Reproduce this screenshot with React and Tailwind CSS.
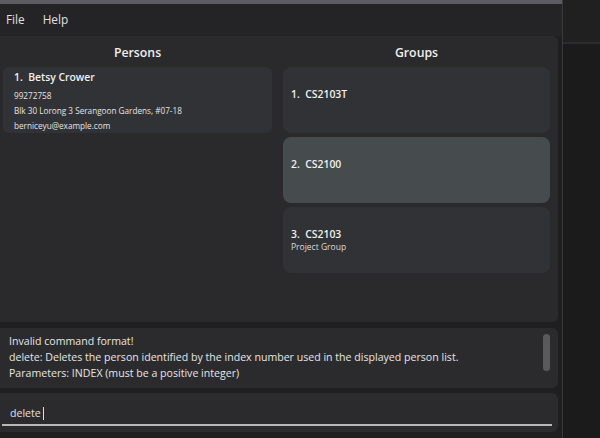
import React from 'react';

const font = { fontFamily: '"Open Sans", "Noto Sans", sans-serif' };

function GroupCard({ index, name, desc, selected }) {
    return (
        <div className={`h-[66px] rounded-lg flex flex-col justify-center pl-[8px] ${selected ? 'bg-[#464b4e]' : 'bg-[#313235]'}`}>
            <div className="text-[10.4px] font-semibold text-[#f0f0f0] leading-[14px]">
                {index}.&nbsp; {name}
            </div>
            <div className="h-[12px] text-[8.5px] text-[#dcdcdc] leading-[12px]">{desc}</div>
        </div>
    );
}

export default function App() {
    return (
        <div className="w-[600px] h-[438px] bg-[#1f1f21] flex overflow-hidden text-[#eaeaea]" style={font}>
            {/* main window */}
            <div className="w-[562px] flex flex-col">
                <div className="h-[4px] bg-[#5c5c60]" />
                <div className="h-[32px] bg-[#242426] flex items-center gap-[18px] px-[6px] text-[11.8px] text-[#e0e0e0]">
                    <span>File</span>
                    <span>Help</span>
                </div>

                {/* lists */}
                <div className="w-[558px] h-[286px] bg-[#2a2a2c] rounded-r-md flex gap-[11px] pl-[3px] pr-[8px]">
                    <div className="w-[269px] flex flex-col">
                        <div className="h-[31px] pt-[3px] flex items-center justify-center text-[12.3px] font-semibold text-[#f0f0f0]">Persons</div>
                        <div className="h-[66px] bg-[#313235] rounded-md pl-[11px] pt-[3px]">
                            <div className="text-[10.4px] font-semibold text-[#f0f0f0] leading-[14px] mb-[4px]">1.&nbsp; Betsy Crower</div>
                            <div className="text-[8.2px] leading-[15px] text-[#e4e4e4]">99272758</div>
                            <div className="text-[8.2px] leading-[15px] text-[#e4e4e4]">Blk 30 Lorong 3 Serangoon Gardens, #07-18</div>
                            <div className="text-[8.2px] leading-[15px] text-[#e4e4e4]">berniceyu@example.com</div>
                        </div>
                    </div>
                    <div className="flex-1 flex flex-col">
                        <div className="h-[31px] pt-[3px] flex items-center justify-center text-[12.3px] font-semibold text-[#f0f0f0]">Groups</div>
                        <div className="flex flex-col gap-[4px]">
                            <GroupCard index={1} name="CS2103T" />
                            <GroupCard index={2} name="CS2100" selected />
                            <GroupCard index={3} name="CS2103" desc="Project Group" />
                        </div>
                    </div>
                </div>

                {/* result box */}
                <div className="mt-[6px] w-[558px] h-[60px] bg-[#2b2b2d] rounded-r-md flex pl-[9px] pr-[8px] pt-[5px] overflow-hidden">
                    <div className="flex-1 text-[10.6px] leading-[16px] text-[#e6e6e6]">
                        <div>Invalid command format!</div>
                        <div>delete: Deletes the person identified by the index number used in the displayed person list.</div>
                        <div>Parameters: INDEX (must be a positive integer)</div>
                    </div>
                    <div className="w-[7px] h-[37px] mt-[1px] rounded-sm bg-[#5a5a5d]" />
                </div>

                {/* command box */}
                <div className="mt-[5px] w-[558px] h-[39px] bg-[#2b2b2d] rounded-r-md flex flex-col justify-end pb-[6px] pl-[2px] pr-[6px]">
                    <div className="flex items-center pl-[8px] text-[10.6px] text-[#e0e0e0] leading-[16px]">
                        delete<span className="ml-[2px] w-[1px] h-[13px] bg-[#dcdcdc]" />
                    </div>
                    <div className="mt-[3px] h-[2px] bg-[#b8b8b8]" />
                </div>
                <div className="flex-1 bg-[#1f1f21]" />
            </div>

            {/* window behind */}
            <div className="flex-1 border-l border-[#3a3a3c] bg-[#1b1b1b] flex flex-col">
                <div className="h-[44px] bg-[#202021] border-b-2 border-[#2c2c2e]" />
            </div>
        </div>
    );
}
